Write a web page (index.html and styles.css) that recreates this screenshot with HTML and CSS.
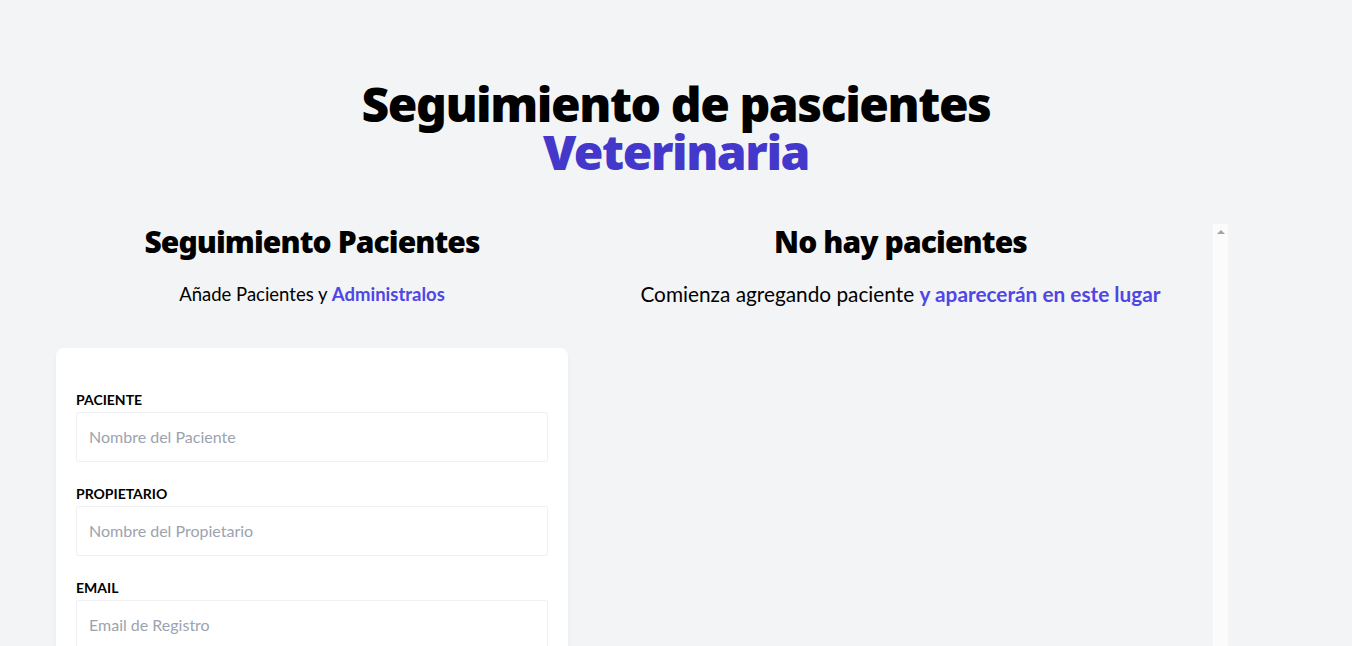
FILE: index.html
```html
<!DOCTYPE html>
<html lang="es">
<head>
<meta charset="utf-8">
<title>Seguimiento de pascientes Veterinaria</title>
<link rel="stylesheet" href="styles.css">
</head>
<body>
<div class="container">
  <h1 class="title">Seguimiento de pascientes <span class="accent-dark">Veterinaria</span></h1>
  <div class="columns">
    <div class="col-form">
      <h2 class="subtitle">Seguimiento Pacientes</h2>
      <p class="lead">Añade Pacientes y <span class="accent">Administralos</span></p>
      <form class="card">
        <div class="field">
          <label class="label" for="mascota">Paciente</label>
          <input class="input" id="mascota" type="text" placeholder="Nombre del Paciente">
        </div>
        <div class="field">
          <label class="label" for="propietario">Propietario</label>
          <input class="input" id="propietario" type="text" placeholder="Nombre del Propietario">
        </div>
        <div class="field">
          <label class="label" for="email">Email</label>
          <input class="input" id="email" type="email" placeholder="Email de Registro">
        </div>
        <div class="field">
          <label class="label" for="alta">Alta</label>
          <input class="input" id="alta" type="date">
        </div>
        <div class="field">
          <label class="label" for="sintomas">Síntomas</label>
          <textarea class="input" id="sintomas" placeholder="Describe los Síntomas"></textarea>
        </div>
        <input class="submit" type="submit" value="Agregar Paciente">
      </form>
    </div>
    <div class="col-list">
      <div class="list-content">
        <h2 class="subtitle">No hay pacientes</h2>
        <p class="lead lead-lg">Comienza agregando paciente <span class="accent">y aparecerán en este lugar</span></p>
      </div>
      <div class="scroll-track" aria-hidden="true">
        <div class="scroll-arrow"></div>
      </div>
    </div>
  </div>
</div>
</body>
</html>
```

FILE: styles.css
```css
html {
  scrollbar-width: none;
}
* {
  box-sizing: border-box;
}
body {
  margin: 0;
  background: #f3f4f6;
  font-family: "Lato", "Open Sans", sans-serif;
  color: #000;
}
.container {
  max-width: 1280px;
  margin: 80px auto 0;
}
.title {
  margin: 0 auto;
  width: 66.6667%;
  text-align: center;
  font-family: "Noto Sans", "Open Sans", sans-serif;
  font-size: 48px;
  line-height: 48px;
  font-weight: 900;
  letter-spacing: -0.03em;
}
.accent-dark {
  color: #4338ca;
}
.columns {
  display: flex;
  margin-top: 48px;
}
.col-form {
  width: 512px;
  margin: 0 20px;
  flex-shrink: 0;
}
.col-list {
  width: 640px;
  height: 646px;
  display: flex;
  flex-shrink: 0;
}
.list-content {
  flex: 1;
}
.scroll-track {
  width: 15px;
  flex-shrink: 0;
  background: #fbfbfb;
  padding-top: 6px;
}
.scroll-arrow {
  width: 0;
  height: 0;
  margin: 0 auto;
  border-left: 4px solid transparent;
  border-right: 4px solid transparent;
  border-bottom: 4px solid #a3a3a3;
}
.subtitle {
  margin: 0;
  text-align: center;
  font-family: "Noto Sans", "Open Sans", sans-serif;
  font-size: 30px;
  line-height: 36px;
  font-weight: 900;
  letter-spacing: -0.03em;
}
.lead {
  margin: 20px 0 40px;
  text-align: center;
  font-size: 18.5px;
  line-height: 28px;
}
.lead-lg {
  font-size: 20.8px;
}
.accent {
  color: #4f46e5;
  font-weight: 700;
}
.card {
  background: #fff;
  border-radius: 8px;
  box-shadow: 0 4px 6px -1px rgba(0,0,0,0.05), 0 2px 4px -2px rgba(0,0,0,0.04);
  padding: 40px 20px;
  margin-bottom: 40px;
}
.field {
  margin-bottom: 20px;
}
.label {
  display: block;
  font-size: 14px;
  line-height: 24px;
  font-weight: 700;
  text-transform: uppercase;
  color: #000;
}
.input {
  display: block;
  width: 100%;
  border: 1px solid #f0f1f3;
  border-radius: 2px;
  padding: 12px;
  font-family: inherit;
  font-size: 16px;
  line-height: 24px;
  background: #fff;
  color: #111;
}
.input::placeholder {
  color: #9ca3af;
}
textarea.input {
  height: 100px;
  resize: vertical;
}
.submit {
  width: 100%;
  background: #4f46e5;
  color: #fff;
  border: 0;
  padding: 12px;
  font-family: inherit;
  font-size: 16px;
  font-weight: 700;
  text-transform: uppercase;
  border-radius: 6px;
}
```
